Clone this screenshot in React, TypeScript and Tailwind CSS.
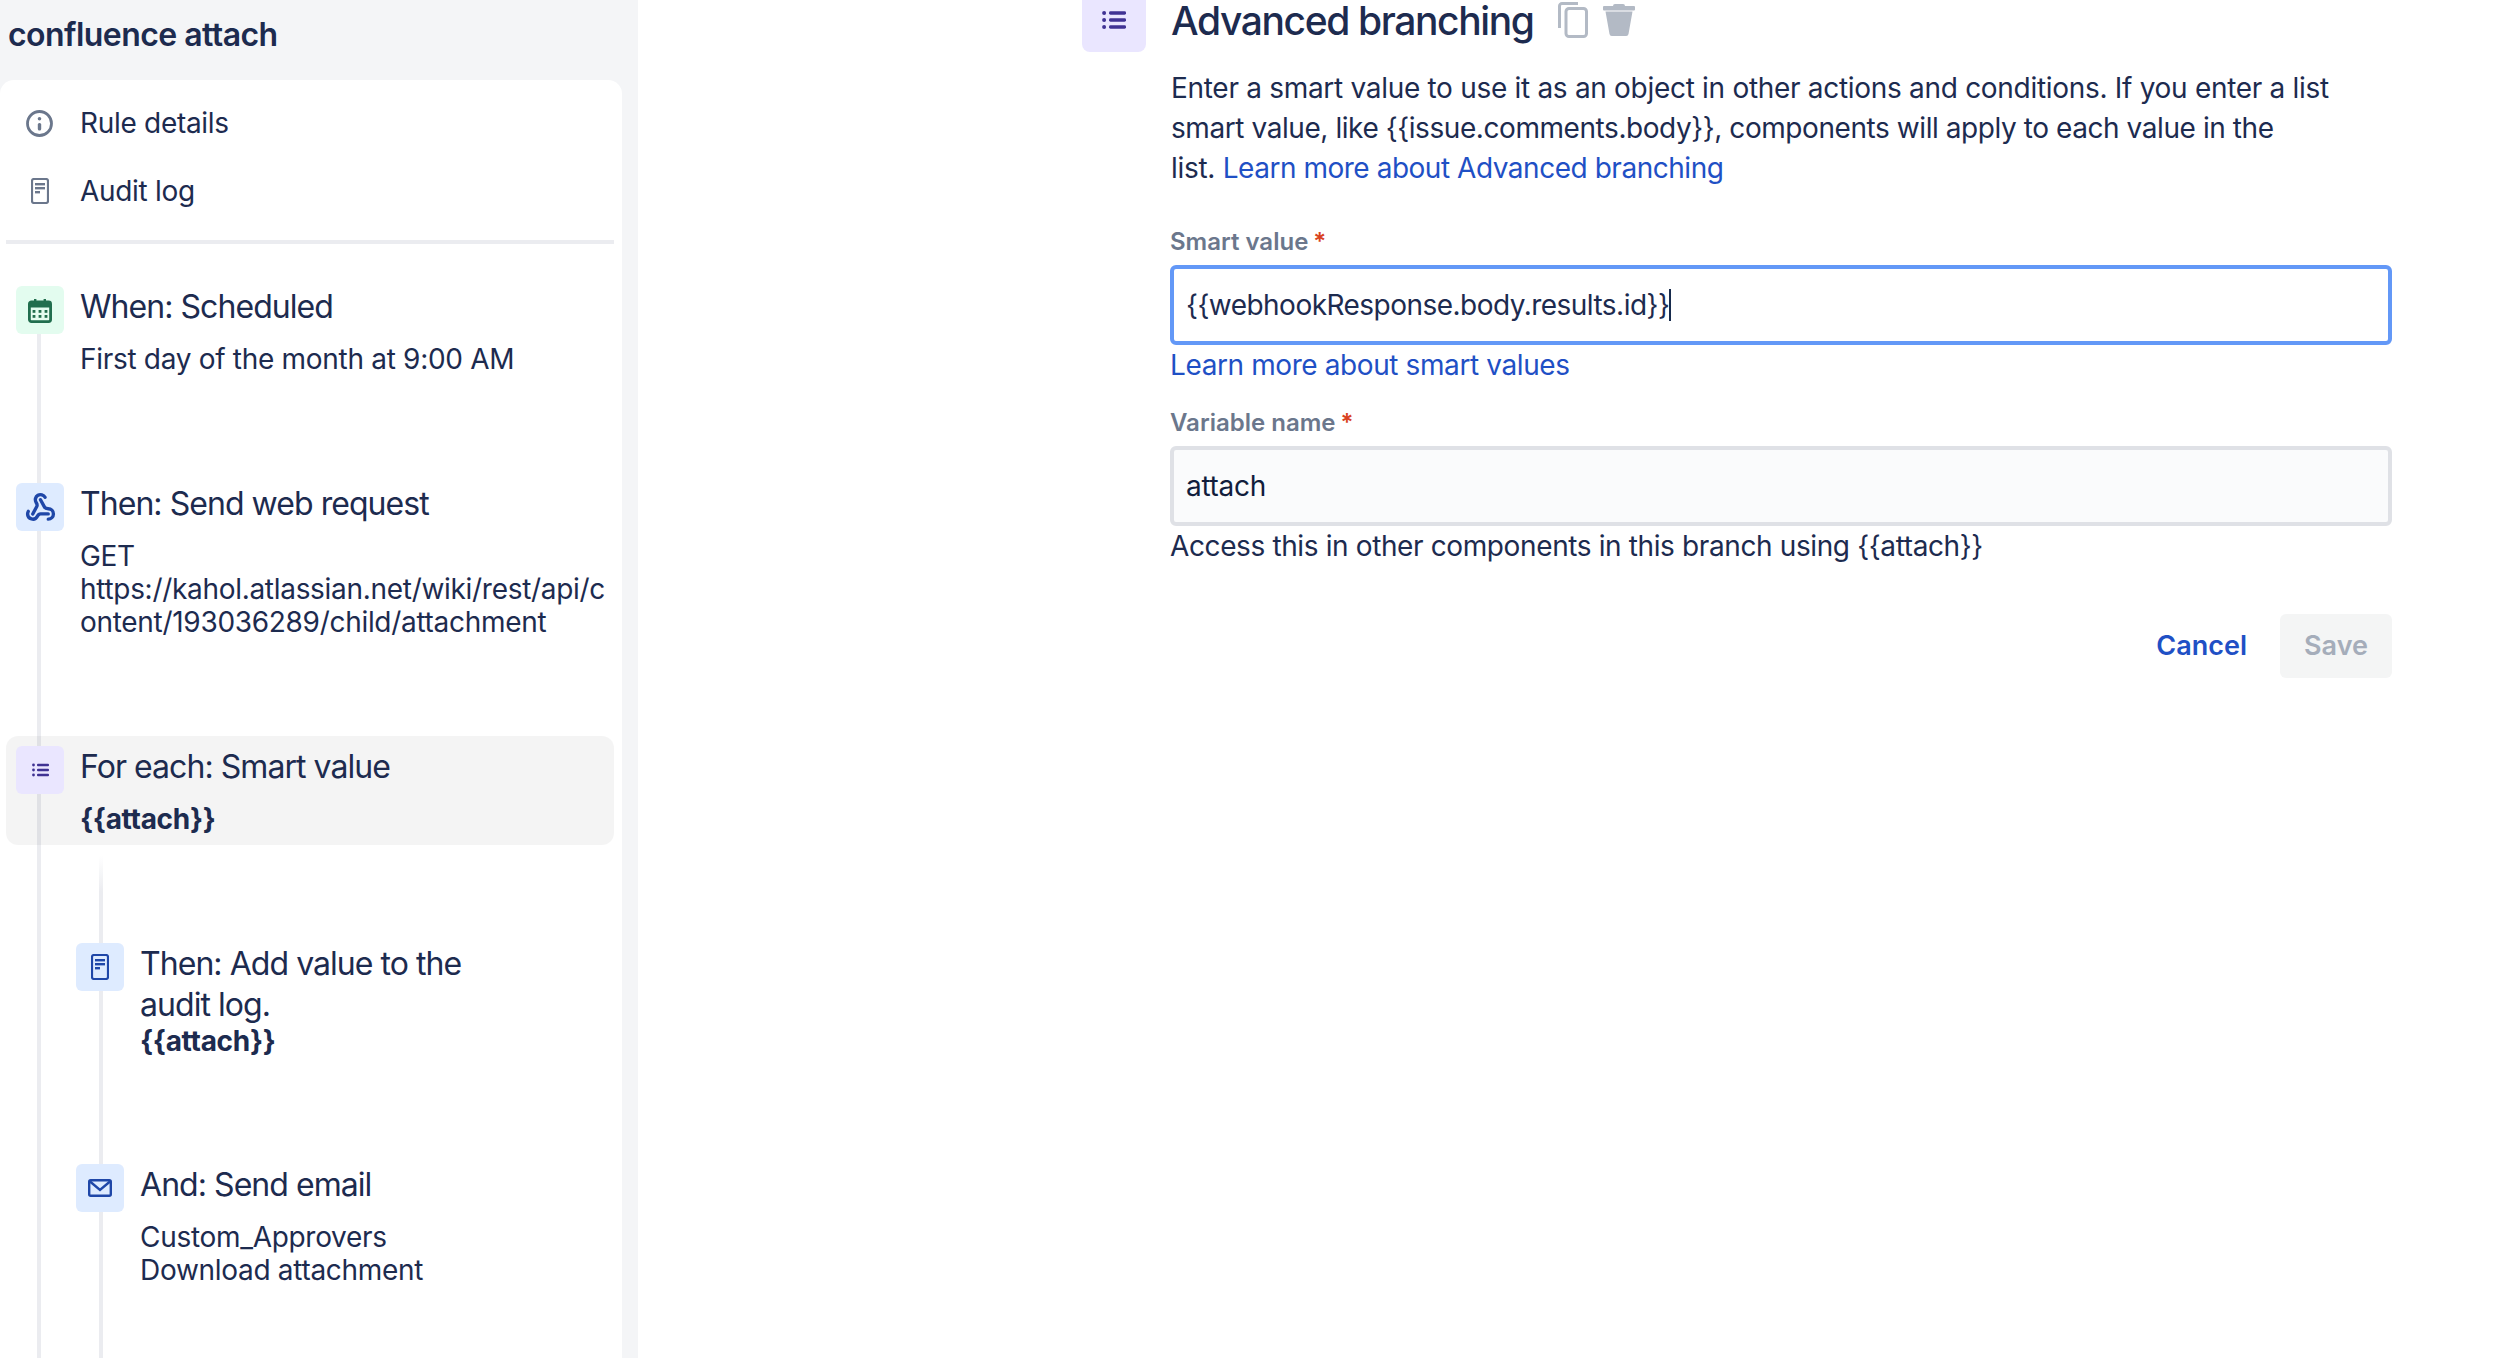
import React from "react";
import { Webhook } from "lucide-react";

const ink = "text-[#1d2b4f]";

function ListIcon({ className }: { className?: string }) {
  return (
    <svg viewBox="0 0 17 14" className={className} fill="currentColor">
      <circle cx="1.5" cy="2" r="1.4" />
      <circle cx="1.5" cy="7" r="1.4" />
      <circle cx="1.5" cy="12" r="1.4" />
      <rect x="5" y="0.8" width="12" height="2.4" rx="1" />
      <rect x="5" y="5.8" width="12" height="2.4" rx="1" />
      <rect x="5" y="10.8" width="12" height="2.4" rx="1" />
    </svg>
  );
}

function DocIcon({ className }: { className?: string }) {
  return (
    <svg viewBox="0 0 18 26" className={className} fill="none">
      <rect x="1" y="1" width="16" height="24" rx="2" stroke="currentColor" strokeWidth="2.2" />
      <rect x="4" y="5" width="10" height="2.4" fill="currentColor" />
      <rect x="4" y="9" width="10" height="2.4" fill="currentColor" />
      <rect x="4" y="13" width="5" height="2.4" fill="currentColor" />
    </svg>
  );
}

function InfoIcon() {
  return (
    <svg viewBox="0 0 27 27" className="h-[27px] w-[27px] text-[#6b778c]" fill="none">
      <circle cx="13.5" cy="13.5" r="12" stroke="currentColor" strokeWidth="2.8" />
      <circle cx="13.5" cy="8.8" r="1.8" fill="currentColor" />
      <rect x="11.8" y="13" width="3.4" height="7.5" rx="1.5" fill="currentColor" />
    </svg>
  );
}

function CalendarIcon() {
  return (
    <svg viewBox="0 0 24 25" className="h-[25px] w-[24px] text-[#216e4e]" fill="none">
      <path d="M1.5 6a2.5 2.5 0 0 1 2.5-2.5h2V1h2.4v2.5h7.2V1H18v2.5h2A2.5 2.5 0 0 1 22.5 6v3.5h-21z" fill="currentColor" />
      <rect x="1.4" y="4" width="21.2" height="19.6" rx="2" stroke="currentColor" strokeWidth="2.8" />
      {[4.6, 10.6, 16.6].map((x) => (
        <React.Fragment key={x}>
          <rect x={x} y="12" width="2.8" height="2.8" fill="currentColor" />
          <rect x={x} y="17" width="2.8" height="2.8" fill="currentColor" />
        </React.Fragment>
      ))}
    </svg>
  );
}

function MailIcon() {
  return (
    <svg viewBox="0 0 24 18" className="h-[18px] w-[24px] text-[#1f47a8]" fill="none" stroke="currentColor" strokeWidth="2.4">
      <rect x="1.2" y="1.2" width="21.6" height="15.6" rx="1.5" />
      <path d="M2 2.5 12 11 22 2.5" />
    </svg>
  );
}

function CopyIcon() {
  return (
    <svg viewBox="0 0 30 36" className="h-[36px] w-[30px] text-[#b3bac5]" fill="none" stroke="currentColor">
      <path d="M20 1.5H4A2.5 2.5 0 0 0 1.5 4v22" strokeWidth="3" />
      <rect x="8" y="6.5" width="20.5" height="28" rx="3" strokeWidth="3" />
    </svg>
  );
}

function TrashIcon() {
  return (
    <svg viewBox="0 0 32 32" className="h-[32px] w-[32px] text-[#b3bac5]" fill="currentColor">
      <path d="M12 0h8a2 2 0 0 1 2 2H31a1 1 0 0 1 1 1v2.5a1 1 0 0 1-1 1H1a1 1 0 0 1-1-1V3a1 1 0 0 1 1-1h9a2 2 0 0 1 2-2z" />
      <path d="M2.5 7.5h27L25.5 30a2.4 2.4 0 0 1-2.4 2H8.9a2.4 2.4 0 0 1-2.4-2z" />
    </svg>
  );
}

function IconBox({ className, children }: { className: string; children: React.ReactNode }) {
  return (
    <div className={`relative z-10 flex h-[48px] w-[48px] shrink-0 items-center justify-center rounded-[6px] ${className}`}>
      {children}
    </div>
  );
}

function Step({
  icon,
  title,
  children,
  className = "pb-[97px]",
}: {
  icon: React.ReactNode;
  title: React.ReactNode;
  children: React.ReactNode;
  className?: string;
}) {
  return (
    <div className={`relative flex gap-[16px] pl-[10px] pt-[10px] ${className}`}>
      {icon}
      <div className="min-w-0 flex-1">
        <div className="text-[32px] leading-[41px] tracking-[-0.95px]">{title}</div>
        {children}
      </div>
    </div>
  );
}

export default function App() {
  return (
    <div className={`flex h-[1358px] w-full overflow-hidden bg-white font-['Inter',sans-serif] tracking-[-0.3px] ${ink} antialiased`}>
      <aside className="flex w-[638px] shrink-0 flex-col bg-[#f4f5f7] pr-[16px]">
        <div className="h-[80px] shrink-0 pl-[8px] pt-[15px] text-[32px] font-semibold leading-[40px] tracking-[-0.55px]">
          confluence attach
        </div>
        <div className="flex min-h-0 flex-1 flex-col overflow-hidden rounded-t-[14px] bg-white pl-[6px] pr-[8px] pt-[9px]">
          <div className="flex h-[68px] shrink-0 items-center text-[28px]">
            <div className="flex w-[74px] justify-center pr-[7px]">
              <InfoIcon />
            </div>
            Rule details
          </div>
          <div className="flex h-[68px] shrink-0 items-center text-[28px]">
            <div className="flex w-[74px] justify-center pr-[6px]">
              <DocIcon className="h-[26px] w-[18px] text-[#6b778c]" />
            </div>
            Audit log
          </div>
          <div className="mt-[15px] h-[4px] shrink-0 bg-[#ebecf0]" />
          <div className="relative flex-1 pt-[32px] text-[28px] leading-[33px]">
            <div className="absolute bottom-0 left-[31px] top-[90px] w-[4px] bg-[#ebecf0]" />
            <div className="absolute bottom-0 left-[93px] top-[612px] w-[4px] bg-[linear-gradient(to_bottom,transparent,#ebecf0_36px)]" />
            <Step icon={<IconBox className="bg-[#e3fcef]"><CalendarIcon /></IconBox>} title="When: Scheduled">
              <div className="mt-[16px]">First day of the month at 9:00 AM</div>
            </Step>
            <Step icon={<IconBox className="bg-[#deebff]"><Webhook size={31} strokeWidth={2.6} className="text-[#1f47a8]" /></IconBox>} title="Then: Send web request">
              <div className="mt-[16px] break-all pr-[8px]">
                GET
                <br />
                https://kahol.atlassian.net/wiki/rest/api/content/193036289/child/attachment
              </div>
            </Step>
            <Step
              className="rounded-[12px] bg-[#0000000b] pb-[9px]"
              icon={<IconBox className="bg-[#eae6ff]"><ListIcon className="h-[14px] w-[17px] text-[#403294]" /></IconBox>}
              title="For each: Smart value"
            >
              <div className="mt-[16px] font-bold">{"{{attach}}"}</div>
            </Step>
            <div className="pl-[60px] pt-[88px]">
              <Step
                className="pb-[96px]"
                icon={<IconBox className="bg-[#deebff]"><DocIcon className="h-[26px] w-[18px] text-[#1f47a8]" /></IconBox>}
                title={
                  <>
                    Then: Add value to the
                    <br />
                    audit log.
                  </>
                }
              >
                <div className="font-bold">{"{{attach}}"}</div>
              </Step>
              <Step icon={<IconBox className="bg-[#deebff]"><MailIcon /></IconBox>} title="And: Send email">
                <div className="mt-[16px]">
                  Custom_Approvers
                  <br />
                  Download attachment
                </div>
              </Step>
            </div>
          </div>
        </div>
      </aside>
      <main className="w-[1310px] pl-[444px]">
        <div className="-mt-[12px] flex items-center gap-[25px]">
          <div className="flex h-[64px] w-[64px] items-center justify-center rounded-[8px] bg-[#eae6ff]">
            <ListIcon className="h-[20px] w-[24px] text-[#403294]" />
          </div>
          <h1 className="mt-[2px] text-[39px] font-medium leading-[40px] tracking-[-1.38px]">Advanced branching</h1>
          <div className="ml-[-1px] flex items-center gap-[15px]">
            <CopyIcon />
            <TrashIcon />
          </div>
        </div>
        <div className="ml-[88px] mt-[16px] w-[1222px] text-[28px] leading-[40px]">
          <p className="whitespace-nowrap pl-[1px]">
            Enter a smart value to use it as an object in other actions and conditions. If you enter a list
            <br />
            <span className="tracking-[-0.43px]">smart value, like {"{{issue.comments.body}}"}, components will apply to each value in the</span>
            <br />
            list. <span className="tracking-[-0.47px] text-[#1f50c5]">Learn more about Advanced branching</span>
          </p>
          <div className="mt-[38px] flex h-[32px] items-center text-[24px] font-semibold tracking-normal text-[#6b778c]">
            Smart value<span className="ml-[5px] text-[#d9431e]">*</span>
          </div>
          <div className="mt-[7px] flex h-[80px] items-center rounded-[6px] border-[4px] border-[#6398f7] bg-white pl-[12px] tracking-[-0.53px]">
            <span>{"{{webhookResponse.body.results.id}}"}</span>
            <span className="h-[32px] w-[2px] bg-[#172b4d]" />
          </div>
          <div className="tracking-[-0.4px] text-[#1f50c5]">Learn more about smart values</div>
          <div className="mt-[22px] flex h-[32px] items-center text-[24px] font-semibold tracking-normal text-[#6b778c]">
            Variable name<span className="ml-[5px] text-[#d9431e]">*</span>
          </div>
          <div className="mt-[7px] flex h-[80px] items-center rounded-[6px] border-[4px] border-[#dfe1e6] bg-[#fafbfc] pl-[12px] text-[#111d3c]">
            attach
          </div>
          <div className="leading-[41px] tracking-[-0.38px]">Access this in other components in this branch using {"{{attach}}"}</div>
          <div className="mt-[47px] flex justify-end gap-[8px] text-[27px] font-semibold leading-[40px] tracking-normal">
            <button className="h-[64px] px-[25px] text-[#1f50c5]">Cancel</button>
            <button className="h-[64px] w-[112px] rounded-[6px] bg-[#f4f5f5] text-[#a5adba]">Save</button>
          </div>
        </div>
      </main>
    </div>
  );
}
